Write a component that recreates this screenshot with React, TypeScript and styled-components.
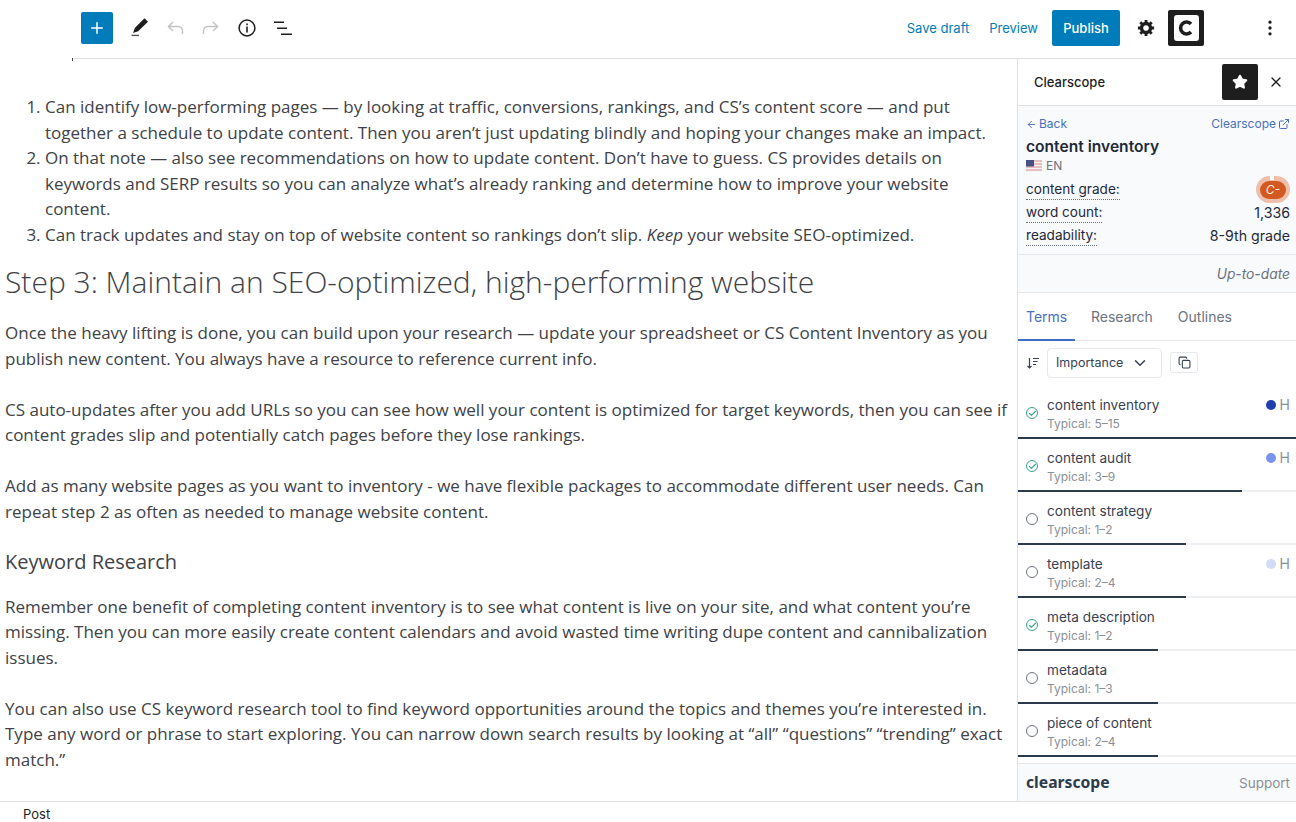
import React from 'react'
import styled, {createGlobalStyle} from 'styled-components'
import {ArrowLeft, Check, ChevronDown, Copy, ExternalLink, MoreVertical, Plus, Star, X} from 'lucide-react'

const GlobalStyle = createGlobalStyle`
    html, body {
        margin: 0;
        padding: 0;
        background: #fff;
    }
    body {
        font-family: Inter, 'Liberation Sans', sans-serif;
        overflow: hidden;
    }
`

const Page = styled.div`
    width: 1296px;
    height: 822px;
    display: flex;
    flex-direction: column;
    overflow: hidden;
`

const TopBar = styled.header`
    height: 59px;
    flex: none;
    display: flex;
    box-sizing: border-box;
`

const LogoGap = styled.div`
    width: 72px;
    flex: none;
`

const Toolbar = styled.div`
    flex: 1;
    display: flex;
    align-items: center;
    justify-content: space-between;
    border-bottom: 1px solid #e0e0e0;
    position: relative;
    padding-bottom: 3px;
    box-sizing: border-box;

    &::after {
        content: '';
        position: absolute;
        left: 0;
        bottom: -3px;
        width: 1px;
        height: 3px;
        background: #444;
    }
`

const ToolGroup = styled.div`
    display: flex;
    align-items: center;
`

const InserterButton = styled.button`
    width: 32px;
    height: 32px;
    margin-left: 9px;
    margin-right: 8px;
    border: 0;
    border-radius: 2px;
    background: #007cba;
    color: #fff;
    display: flex;
    align-items: center;
    justify-content: center;
    padding: 0;
`

const IconSlot = styled.span<{$faded?: boolean}>`
    width: 36px;
    height: 36px;
    display: flex;
    align-items: center;
    justify-content: center;
    color: ${(props) => (props.$faded ? '#c4c4c4' : '#1e1e1e')};
`

const TextAction = styled.span`
    font-size: 13px;
    color: #007cba;
    margin-right: 20px;
`

const PublishButton = styled.button`
    width: 68px;
    height: 36px;
    border: 0;
    border-radius: 2px;
    background: #007cba;
    color: #fff;
    font: 500 13px Inter, sans-serif;
    padding: 0;
    margin-left: -6px;
`

const SettingsSlot = styled.span`
    width: 44px;
    margin-left: 4px;
    display: flex;
    justify-content: center;
    color: #1e1e1e;
`

const DarkSquare = styled.span`
    width: 36px;
    height: 36px;
    background: #1e1e1e;
    border-radius: 2px;
    display: flex;
    align-items: center;
    justify-content: center;
    color: #fff;
`

const LogoTile = styled.span`
    width: 25px;
    height: 26px;
    border-radius: 3px;
    background: #fff;
    color: #1e1e1e;
    display: flex;
    align-items: center;
    justify-content: center;
`

const MoreSlot = styled.span`
    width: 92px;
    display: flex;
    justify-content: flex-end;
    padding-right: 16px;
    box-sizing: border-box;
    color: #1e1e1e;
`

const Body = styled.div`
    flex: 1;
    min-height: 0;
    display: flex;
`

const Editor = styled.main`
    width: 1018px;
    flex: none;
    box-sizing: border-box;
    border-right: 1px solid #e0e0e0;
    padding: 35px 0 0 5px;
    overflow: hidden;
    font-family: 'Open Sans', sans-serif;
    font-size: 17px;
    line-height: 25.5px;
    color: #404246;
`

const Steps = styled.ol`
    margin: 0;
    padding: 0 0 0 40px;
`

const BigHeading = styled.h2`
    margin: 13px 0 16px;
    font-size: 30px;
    line-height: 44px;
    font-weight: 300;
`

const SubHeading = styled.h3`
    margin: 0 0 20px;
    font-size: 20px;
    line-height: 24px;
    font-weight: 400;
`

const Para = styled.p`
    margin: 0 0 25.5px;
`

const Panel = styled.aside`
    flex: 1;
    min-width: 0;
    display: flex;
    flex-direction: column;
`

const PanelHeader = styled.div`
    height: 47px;
    flex: none;
    display: flex;
    align-items: center;
    box-sizing: border-box;
    padding: 0 2px 0 16px;
    border-bottom: 1px solid #e0e0e0;
    font-size: 13px;
    font-weight: 500;
    color: #1e1e1e;
`

const PanelTitle = styled.span`
    flex: 1;
`

const CloseSlot = styled.span`
    width: 36px;
    display: flex;
    justify-content: center;
    color: #1e1e1e;
`

const Summary = styled.section`
    background: #f8fafc;
    padding: 10px 6px 0 8px;
    height: 149px;
    box-sizing: border-box;
    flex: none;
    border-bottom: 1px solid #e5e7eb;
`

const LinkRow = styled.div`
    display: flex;
    justify-content: space-between;
    font-size: 12px;
    line-height: 16px;
    color: #4a6fc0;
`

const LinkPart = styled.span`
    display: flex;
    align-items: center;
    gap: 2px;
`

const KeywordTitle = styled.div`
    font-size: 15.6px;
    font-weight: 600;
    line-height: 22px;
    color: #1f2937;
    margin-top: 4px;
`

const Lang = styled.div`
    display: flex;
    align-items: center;
    gap: 4px;
    font-size: 12px;
    line-height: 16px;
    color: #6b7280;
    margin-bottom: 4px;
`

const Stat = styled.div`
    display: flex;
    justify-content: space-between;
    align-items: center;
    height: 23px;
    font-size: 14.2px;
    color: #1f2937;
`

const StatLabel = styled.span`
    font-size: 13.6px;
    line-height: 19px;
    border-bottom: 1px dotted #6b7280;
`

const GradeRing = styled.span`
    width: 34px;
    height: 27px;
    border-radius: 14px;
    background: #eec0ab;
    display: flex;
    align-items: center;
    justify-content: center;
    position: relative;

    &::before {
        content: '';
        position: absolute;
        top: 0;
        left: 14px;
        width: 4px;
        height: 4px;
        background: #f8fafc;
    }
`

const GradePill = styled.span`
    width: 26px;
    height: 18px;
    border-radius: 9px;
    background: #d05a22;
    color: #fde9de;
    font-size: 12px;
    font-style: italic;
    text-align: center;
    line-height: 18px;
`

const Status = styled.div`
    background: #f8fafc;
    height: 38px;
    flex: none;
    box-sizing: border-box;
    border-bottom: 1px solid #e5e7eb;
    display: flex;
    align-items: center;
    justify-content: flex-end;
    padding-right: 6px;
    font-size: 13.8px;
    font-style: italic;
    color: #6b7280;
`

const Tabs = styled.nav`
    height: 48px;
    flex: none;
    display: flex;
    box-sizing: border-box;
    border-bottom: 1px solid #e5e7eb;
    font-size: 14px;
`

const Tab = styled.span<{$active?: boolean}>`
    width: ${(props) => (props.$active ? '57px' : 'auto')};
    box-sizing: border-box;
    padding-left: ${(props) => (props.$active ? '8px' : '0')};
    margin-right: ${(props) => (props.$active ? '16px' : '25px')};
    line-height: 47px;
    height: 48px;
    color: ${(props) => (props.$active ? '#4a6fc0' : '#6b7280')};
    border-bottom: ${(props) => (props.$active ? '2px solid #3f6cc4' : '0')};
`

const SortBar = styled.div`
    height: 45px;
    box-sizing: border-box;
    padding: 0 0 2px 8px;
    flex: none;
    display: flex;
    align-items: center;
    color: #374151;
`

const SortSelect = styled.div`
    width: 115px;
    height: 30px;
    box-sizing: border-box;
    margin-left: 7px;
    border: 1px solid #e5e7eb;
    border-radius: 4px;
    display: flex;
    align-items: center;
    justify-content: space-between;
    padding: 0 12px 0 8px;
    font-size: 12.5px;
    color: #374151;
`

const CopyButton = styled.span`
    width: 28px;
    height: 21px;
    box-sizing: border-box;
    margin-left: 8px;
    border: 1px solid #e5e7eb;
    border-radius: 3px;
    display: flex;
    align-items: center;
    justify-content: center;
`

const TermList = styled.div`
    flex: 1;
    min-height: 0;
    overflow: hidden;
`

const Row = styled.div`
    height: 53px;
    box-sizing: border-box;
    position: relative;
    display: flex;
    align-items: flex-start;
    padding: 10px 6px 0 8px;
`

const CircleMark = styled.span<{$done?: boolean}>`
    width: 12px;
    height: 12px;
    box-sizing: border-box;
    flex: none;
    border-radius: 50%;
    border: 1.2px solid ${(props) => (props.$done ? '#3aa67f' : '#6b7280')};
    color: #3aa67f;
    display: flex;
    align-items: center;
    justify-content: center;
    margin-top: 11px;
`

const TermText = styled.div`
    flex: 1;
    margin-left: 9px;
`

const TermName = styled.div`
    font-size: 13.6px;
    line-height: 19px;
    color: #374151;
`

const TermHint = styled.div`
    font-size: 12px;
    line-height: 17px;
    color: #8b9097;
`

const Importance = styled.div<{$dot: string}>`
    position: absolute;
    top: 10px;
    right: 6px;
    display: flex;
    align-items: center;
    gap: 4px;
    font-size: 14px;
    line-height: 18px;
    color: #8b9097;

    &::before {
        content: '';
        width: 10px;
        height: 10px;
        border-radius: 50%;
        background: ${(props) => props.$dot};
    }
`

const Track = styled.div`
    position: absolute;
    left: 0;
    right: 0;
    bottom: 0;
    height: 2px;
    background: #eef0f2;
`

const Fill = styled.div`
    height: 100%;
    background: #2b3b4c;
`

const PanelFooter = styled.footer`
    height: 38px;
    flex: none;
    box-sizing: border-box;
    background: #f8fafc;
    border-top: 1px solid #e5e7eb;
    display: flex;
    align-items: center;
    justify-content: space-between;
    padding: 0 6px 2px 8px;
`

const Brand = styled.span`
    font-family: 'Noto Sans', sans-serif;
    font-size: 15.7px;
    font-weight: 700;
    color: #2b3b4c;
`

const SupportLink = styled.span`
    font-size: 13.5px;
    color: #8b9097;
    margin-top: 2px;
`

const StatusBar = styled.footer`
    height: 21px;
    flex: none;
    box-sizing: border-box;
    border-top: 1px solid #e0e0e0;
    padding-left: 23px;
    font-size: 13px;
    line-height: 25px;
    color: #1e1e1e;
`

const terms = [
    {name: 'content inventory', hint: 'Typical: 5–15', done: true, dot: '#1e40af', fill: 100},
    {name: 'content audit', hint: 'Typical: 3–9', done: true, dot: '#7b93ee', fill: 80.5},
    {name: 'content strategy', hint: 'Typical: 1–2', done: false, fill: 60.5},
    {name: 'template', hint: 'Typical: 2–4', done: false, dot: '#d3dcf6', fill: 60.5},
    {name: 'meta description', hint: 'Typical: 1–2', done: true, fill: 50.5},
    {name: 'metadata', hint: 'Typical: 1–3', done: false, fill: 50.5},
    {name: 'piece of content', hint: 'Typical: 2–4', done: false, fill: 50.5},
]

const PencilIcon = () => (
    <svg width="24" height="24" viewBox="0 0 24 24" fill="currentColor">
        <path d="M21 5.8 17.5 2.3 8 11.8 6 17 11.2 15.3z" />
        <rect x="4.5" y="18.7" width="7.5" height="1.4" fill="#555" />
    </svg>
)

const UndoIcon = ({flip}: {flip?: boolean}) => (
    <svg width="24" height="24" viewBox="0 0 24 24" fill="none" stroke="currentColor" strokeWidth="1.5" style={flip ? {transform: 'scaleX(-1)'} : undefined}>
        <path d="M10 6 5.5 10.5 10 15" />
        <path d="M5.5 10.5H15a4.5 4.5 0 0 1 4.5 4.5v3" />
    </svg>
)

const InfoIcon = () => (
    <svg width="24" height="24" viewBox="0 0 24 24" fill="none" stroke="currentColor">
        <circle cx="12" cy="12" r="7.9" strokeWidth="1.5" />
        <rect x="11.2" y="10.5" width="1.6" height="6" fill="currentColor" stroke="none" />
        <rect x="11.2" y="7.5" width="1.6" height="1.7" fill="currentColor" stroke="none" />
    </svg>
)

const ListViewIcon = () => (
    <svg width="24" height="24" viewBox="0 0 24 24" fill="currentColor">
        <rect x="3" y="5.5" width="10" height="1.5" />
        <rect x="6" y="11.5" width="10" height="1.5" />
        <rect x="10" y="17.5" width="11" height="1.5" />
    </svg>
)

const CogIcon = () => (
    <svg width="19" height="19" viewBox="0 0 20 20" fill="currentColor">
        <path d="M18 12h-2.18c-.17.7-.44 1.35-.81 1.93l1.54 1.54-2.1 2.1-1.54-1.54c-.58.36-1.23.63-1.91.79V19H8v-2.18c-.68-.16-1.33-.43-1.91-.79l-1.54 1.54-2.12-2.12 1.54-1.54c-.36-.58-.63-1.23-.79-1.91H1V9.03h2.17c.16-.7.44-1.35.8-1.94L2.43 5.55l2.1-2.1 1.54 1.54c.58-.37 1.24-.64 1.93-.81V2h3v2.18c.68.16 1.33.43 1.91.79l1.54-1.54 2.12 2.12-1.54 1.54c.36.59.64 1.24.8 1.94H18V12zm-8.5 1.5c1.66 0 3-1.34 3-3s-1.34-3-3-3-3 1.34-3 3 1.34 3 3 3z" />
    </svg>
)

const FlagIcon = () => (
    <svg width="16" height="12" viewBox="0 0 16 12">
        <rect width="16" height="12" fill="#f3f4f6" />
        <path d="M0 1h16M0 4h16M0 7h16M0 10h16" stroke="#d98a8a" strokeWidth="1.2" />
        <rect width="8" height="6.5" fill="#47507f" />
    </svg>
)

const SortIcon = () => (
    <svg width="14" height="14" viewBox="0 0 14 14" fill="none" stroke="currentColor" strokeWidth="1.2">
        <path d="M3.5 2v10M1.5 10l2 2 2-2" />
        <path d="M7 2.5h6M7 5.5h4.5M7 8.5h3" />
    </svg>
)

const App = () => (
    <Page>
        <GlobalStyle />
        <TopBar>
            <LogoGap />
            <Toolbar>
                <ToolGroup>
                    <InserterButton>
                        <Plus size={18} strokeWidth={2} />
                    </InserterButton>
                    <IconSlot>
                        <PencilIcon />
                    </IconSlot>
                    <IconSlot $faded>
                        <UndoIcon />
                    </IconSlot>
                    <IconSlot $faded>
                        <UndoIcon flip />
                    </IconSlot>
                    <IconSlot>
                        <InfoIcon />
                    </IconSlot>
                    <IconSlot>
                        <ListViewIcon />
                    </IconSlot>
                </ToolGroup>
                <ToolGroup>
                    <TextAction>Save draft</TextAction>
                    <TextAction>Preview</TextAction>
                    <PublishButton>Publish</PublishButton>
                    <SettingsSlot>
                        <CogIcon />
                    </SettingsSlot>
                    <DarkSquare>
                        <LogoTile>
                            <svg width="20" height="20" viewBox="0 0 20 20" fill="none" stroke="currentColor" strokeWidth="3.6">
                                <path d="M15 5.9A6 6 0 1 0 15 14.1" />
                            </svg>
                        </LogoTile>
                    </DarkSquare>
                    <MoreSlot>
                        <MoreVertical size={20} />
                    </MoreSlot>
                </ToolGroup>
            </Toolbar>
        </TopBar>
        <Body>
            <Editor>
                <Steps>
                    <li>Can identify low-performing pages — by looking at traffic, conversions, rankings, and CS’s content score — and put together a schedule to update content. Then you aren’t just updating blindly and hoping your changes make an impact.</li>
                    <li>On that note — also see recommendations on how to update content. Don’t have to guess. CS provides details on keywords and SERP results so you can analyze what’s already ranking and determine how to improve your website content.</li>
                    <li>Can track updates and stay on top of website content so rankings don’t slip. <em>Keep</em> your website SEO-optimized.</li>
                </Steps>
                <BigHeading>Step 3: Maintain an SEO-optimized, high-performing website</BigHeading>
                <Para>Once the heavy lifting is done, you can build upon your research — update your spreadsheet or CS Content Inventory as you publish new content. You always have a resource to reference current info.</Para>
                <Para>CS auto-updates after you add URLs so you can see how well your content is optimized for target keywords, then you can see if content grades slip and potentially catch pages before they lose rankings.</Para>
                <Para>Add as many website pages as you want to inventory - we have flexible packages to accommodate different user needs. Can repeat step 2 as often as needed to manage website content.</Para>
                <SubHeading>Keyword Research</SubHeading>
                <Para>Remember one benefit of completing content inventory is to see what content is live on your site, and what content you’re missing. Then you can more easily create content calendars and avoid wasted time writing dupe content and cannibalization issues.</Para>
                <Para>You can also use CS keyword research tool to find keyword opportunities around the topics and themes you’re interested in. Type any word or phrase to start exploring. You can narrow down search results by looking at “all” “questions” “trending” exact match.”</Para>
            </Editor>
            <Panel>
                <PanelHeader>
                    <PanelTitle>Clearscope</PanelTitle>
                    <DarkSquare>
                        <Star size={16} fill="currentColor" />
                    </DarkSquare>
                    <CloseSlot>
                        <X size={16} />
                    </CloseSlot>
                </PanelHeader>
                <Summary>
                    <LinkRow>
                        <LinkPart>
                            <ArrowLeft size={11} /> Back
                        </LinkPart>
                        <LinkPart>
                            Clearscope <ExternalLink size={12} />
                        </LinkPart>
                    </LinkRow>
                    <KeywordTitle>content inventory</KeywordTitle>
                    <Lang>
                        <FlagIcon /> EN
                    </Lang>
                    <Stat>
                        <StatLabel>content grade:</StatLabel>
                        <GradeRing>
                            <GradePill>C-</GradePill>
                        </GradeRing>
                    </Stat>
                    <Stat>
                        <StatLabel>word count:</StatLabel>
                        <span>1,336</span>
                    </Stat>
                    <Stat>
                        <StatLabel>readability:</StatLabel>
                        <span>8-9th grade</span>
                    </Stat>
                </Summary>
                <Status>Up-to-date</Status>
                <Tabs>
                    <Tab $active>Terms</Tab>
                    <Tab>Research</Tab>
                    <Tab>Outlines</Tab>
                </Tabs>
                <SortBar>
                    <SortIcon />
                    <SortSelect>
                        Importance <ChevronDown size={18} />
                    </SortSelect>
                    <CopyButton>
                        <Copy size={13} />
                    </CopyButton>
                </SortBar>
                <TermList>
                    {terms.map((term) => (
                        <Row key={term.name}>
                            <CircleMark $done={term.done}>{term.done && <Check size={9} strokeWidth={3} />}</CircleMark>
                            <TermText>
                                <TermName>{term.name}</TermName>
                                <TermHint>{term.hint}</TermHint>
                            </TermText>
                            {term.dot && <Importance $dot={term.dot}>H</Importance>}
                            <Track>
                                <Fill style={{width: `${term.fill}%`}} />
                            </Track>
                        </Row>
                    ))}
                </TermList>
                <PanelFooter>
                    <Brand>clearscope</Brand>
                    <SupportLink>Support</SupportLink>
                </PanelFooter>
            </Panel>
        </Body>
        <StatusBar>Post</StatusBar>
    </Page>
)

export default App
